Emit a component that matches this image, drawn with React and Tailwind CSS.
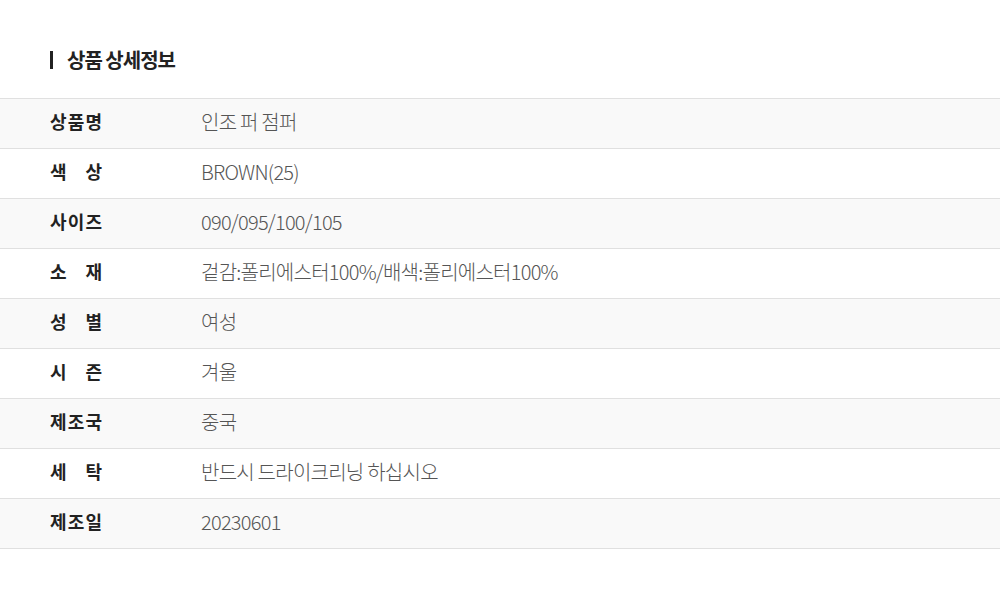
import React from 'react';

const rows = [
  { label: '상품명', value: '인조 퍼 점퍼' },
  { label: '색상', value: 'BROWN(25)' },
  { label: '사이즈', value: '090/095/100/105' },
  { label: '소재', value: '겉감:폴리에스터100%/배색:폴리에스터100%' },
  { label: '성별', value: '여성' },
  { label: '시즌', value: '겨울' },
  { label: '제조국', value: '중국' },
  { label: '세탁', value: '반드시 드라이크리닝 하십시오' },
  { label: '제조일', value: '20230601' },
];

export default function App() {
  return (
    <div
      className="w-[1000px] h-[598px] bg-white"
      style={{ fontFamily: '"Noto Sans CJK KR", "Noto Sans", sans-serif' }}
    >
      {/* Title */}
      <div className="h-[98px] pl-[50px] pt-[48px]">
        <div className="flex items-center h-[24px]">
          <span className="w-[3px] h-[18px] bg-[#222]" />
          <h2 className="ml-[14px] text-[20px] font-bold text-[#222] tracking-[-1px] leading-none">
            상품 상세정보
          </h2>
        </div>
      </div>

      {/* Info table */}
      <div className="border-t border-[#e0e0e0]">
        {rows.map((row, i) => (
          <div
            key={row.label}
            className={`flex items-center h-[50px] pb-[4px] border-b border-[#e0e0e0] ${
              i % 2 === 0 ? 'bg-[#f9f9f9]' : 'bg-white'
            }`}
          >
            <div className="w-[201px] pl-[50px] shrink-0">
              <div className="w-[51px] flex justify-between text-[18px] font-bold text-[#222] tracking-[-1px]">
                {row.label.split('').map((ch, k) => (
                  <span key={k}>{ch}</span>
                ))}
              </div>
            </div>
            <div className="text-[20px] text-[#555] tracking-[-0.75px] font-light">{row.value}</div>
          </div>
        ))}
      </div>
    </div>
  );
}
